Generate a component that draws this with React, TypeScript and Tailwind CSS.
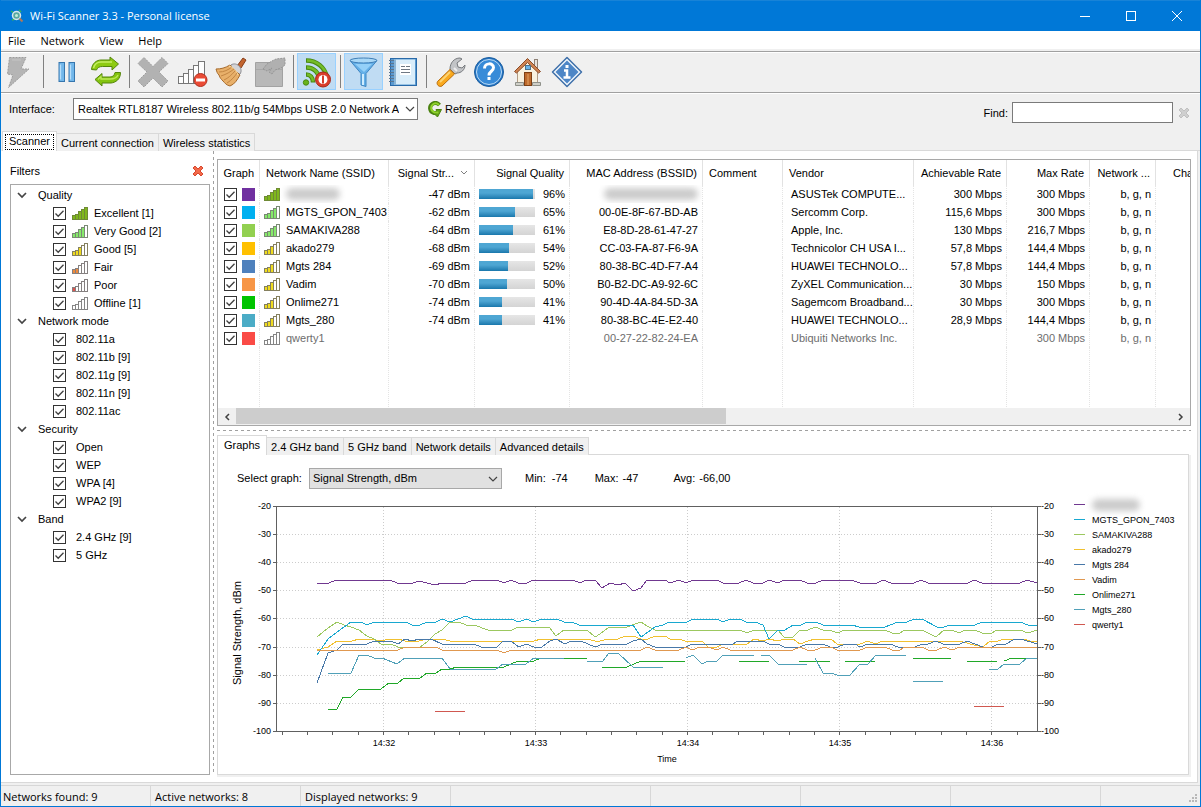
import { useState } from "react";
import type { ReactNode } from "react";

type Quality = "excellent" | "verygood" | "good" | "fair" | "poor" | "offline";

const LEVELS: Record<Quality, { bars: number; fill: string; stroke: string }> = {
  excellent: { bars: 5, fill: "#7fb71c", stroke: "#6f8a35" },
  verygood: { bars: 4, fill: "#86ea6a", stroke: "#7a8a74" },
  good: { bars: 3, fill: "#f0dc1e", stroke: "#85805f" },
  fair: { bars: 2, fill: "#ef8a3c", stroke: "#858080" },
  poor: { bars: 1, fill: "#e0524c", stroke: "#858080" },
  offline: { bars: 0, fill: "#ffffff", stroke: "#858585" },
};

const NETWORKS = [
  { name: "", color: "#7030a0", quality: "excellent", signal: "-47 dBm", percent: 96, mac: "", vendor: "ASUSTek COMPUTE...", rate: "300 Mbps", max: "300 Mbps" },
  { name: "MGTS_GPON_7403", color: "#00b0f0", quality: "verygood", signal: "-62 dBm", percent: 65, mac: "00-0E-8F-67-BD-AB", vendor: "Sercomm Corp.", rate: "115,6 Mbps", max: "300 Mbps" },
  { name: "SAMAKIVA288", color: "#92d050", quality: "verygood", signal: "-64 dBm", percent: 61, mac: "E8-8D-28-61-47-27", vendor: "Apple, Inc.", rate: "130 Mbps", max: "216,7 Mbps" },
  { name: "akado279", color: "#ffc000", quality: "good", signal: "-68 dBm", percent: 54, mac: "CC-03-FA-87-F6-9A", vendor: "Technicolor CH USA I...", rate: "57,8 Mbps", max: "144,4 Mbps" },
  { name: "Mgts 284", color: "#4f81bd", quality: "good", signal: "-69 dBm", percent: 52, mac: "80-38-BC-4D-F7-A4", vendor: "HUAWEI TECHNOLO...", rate: "57,8 Mbps", max: "144,4 Mbps" },
  { name: "Vadim", color: "#f79646", quality: "good", signal: "-70 dBm", percent: 50, mac: "B0-B2-DC-A9-92-6C", vendor: "ZyXEL Communication...", rate: "30 Mbps", max: "150 Mbps" },
  { name: "Onlime271", color: "#00c400", quality: "good", signal: "-74 dBm", percent: 41, mac: "90-4D-4A-84-5D-3A", vendor: "Sagemcom Broadband...", rate: "30 Mbps", max: "300 Mbps" },
  { name: "Mgts_280", color: "#4bacc6", quality: "good", signal: "-74 dBm", percent: 41, mac: "80-38-BC-4E-E2-40", vendor: "HUAWEI TECHNOLO...", rate: "28,9 Mbps", max: "144,4 Mbps" },
  { name: "qwerty1", color: "#fa4b46", quality: "offline", signal: "", percent: null, mac: "00-27-22-82-24-EA", vendor: "Ubiquiti Networks Inc.", rate: "", max: "300 Mbps" },
] as const;

const FILTERS: { title: string; items: { label: string; quality?: Quality }[] }[] = [
  {
    title: "Quality",
    items: [
      { label: "Excellent [1]", quality: "excellent" },
      { label: "Very Good [2]", quality: "verygood" },
      { label: "Good [5]", quality: "good" },
      { label: "Fair", quality: "fair" },
      { label: "Poor", quality: "poor" },
      { label: "Offline [1]", quality: "offline" },
    ],
  },
  {
    title: "Network mode",
    items: [{ label: "802.11a" }, { label: "802.11b [9]" }, { label: "802.11g [9]" }, { label: "802.11n [9]" }, { label: "802.11ac" }],
  },
  { title: "Security", items: [{ label: "Open" }, { label: "WEP" }, { label: "WPA [4]" }, { label: "WPA2 [9]" }] },
  { title: "Band", items: [{ label: "2.4 GHz [9]" }, { label: "5 GHz" }] },
];

const SERIES: { color: string; lines: string[] }[] = [
  {
    color: "#f0c030",
    lines: [
      "317,650 328,647 337,641 352,641 359,639 371,639 381,641 389,639 398,639 405,641 419,641 427,639 442,639 450,641 534,641 541,639 587,639 595,641 600,641 608,639 618,639 625,636 633,636 641,639 648,639 655,636 665,636 670,639 679,639 685,641 702,641 708,647 717,647 723,644 747,644 754,639 763,641 769,639 778,641 784,639 793,639 800,644 808,641 815,639 831,639 837,644 860,644 868,641 875,644 883,641 960,641 970,644 983,647 990,641 998,641 1004,639 1023,639 1030,641 1037,641",
    ],
  },
  {
    color: "#9cc860",
    lines: [
      "317,637 328,628 337,622 344,625 351,627 359,630 367,636 374,639 381,644 391,644 398,647 420,647 427,642 435,634 442,630 450,622 459,622 466,625 474,625 488,630 512,630 518,627 549,627 556,636 564,630 587,630 595,637 600,634 609,627 627,627 641,622 647,626 655,630 740,630 747,633 754,630 778,630 784,637 793,637 800,630 808,630 815,627 823,630 830,630 837,633 845,630 885,630 892,633 900,633 905,630 922,630 936,637 944,630 952,630 959,633 965,630 975,630 982,633 992,633 997,630 1020,630 1028,633 1037,630",
    ],
  },
  {
    color: "#18a8d0",
    lines: [
      "317,655 328,639 336,633 344,627 351,622 361,622 367,625 374,622 406,622 412,625 420,625 427,622 436,622 442,619 450,622 466,616 472,619 511,619 519,622 526,619 534,622 541,619 557,619 564,622 572,622 579,625 633,625 641,637 655,627 663,625 669,622 687,622 693,619 717,619 723,622 730,619 740,619 746,622 755,622 763,625 769,639 778,630 785,630 793,625 801,625 807,622 816,622 823,625 852,625 859,627 885,627 898,622 907,622 914,619 922,619 937,627 944,627 950,625 975,625 982,622 1020,622 1028,625 1037,625",
    ],
  },
  {
    color: "#4878a8",
    lines: [
      "317,683 328,653 337,650 343,644 367,644 374,641 391,641 398,644 405,639 412,641 419,639 431,639 442,644 474,644 481,647 497,647 503,641 511,641 519,647 526,644 534,647 542,647 550,641 556,639 565,644 571,641 581,641 595,647 603,644 627,644 633,641 641,639 647,644 655,647 686,647 692,644 733,644 738,641 763,641 769,644 778,644 784,647 800,647 807,644 823,644 830,647 838,647 845,644 855,644 860,647 868,644 890,644 898,647 915,647 922,644 928,644 936,641 943,644 960,644 967,641 983,647 992,647 998,644 1006,644 1013,640 1021,639 1037,644",
    ],
  },
  {
    color: "#e09850",
    lines: [
      "317,650 398,650 405,647 436,647 442,650 497,650 504,653 511,650 641,650 647,647 655,650 679,650 686,647 692,650 700,647 708,647 717,650 723,647 730,650 793,650 800,647 807,650 815,650 823,647 831,647 837,650 860,650 868,647 885,647 892,650 900,650 905,647 922,647 928,650 937,650 944,647 952,650 960,647 1037,647",
    ],
  },
  {
    color: "#20a828",
    lines: [
      "328,709 337,709 343,697 351,697 359,689 381,689 389,683 398,683 404,678 420,678 427,673 436,673 442,669 450,669 457,667 504,667 518,661 534,661 541,658 587,658",
      "602,667 627,667 641,661 685,661",
      "739,661 769,661",
      "799,661 830,661",
      "845,661 875,661",
      "913,658 951,658",
      "967,661 997,661",
      "1004,661 1012,658 1027,658",
    ],
  },
  {
    color: "#50a0b8",
    lines: [
      "328,673 351,673 359,655 367,655 374,658 382,658 397,664 405,658 442,658 450,669 496,669 503,664 526,664 534,658 564,658",
      "587,661 603,661 609,653 618,653 633,667 663,667",
      "686,658 693,655 702,664 708,661 717,661 723,655 754,655",
      "761,655 769,655 778,664 807,664",
      "815,658 823,673 831,673 837,675 850,675 860,664 868,664 876,655 906,655",
      "913,681 943,681",
      "989,669 998,669 1004,664 1020,664 1027,658 1037,658",
    ],
  },
  { color: "#d05850", lines: ["435,711 465,711", "974,706 1004,706"] },
  {
    color: "#703890",
    lines: [
      "317,583 329,583 336,580 390,580 397,583 413,583 419,581 427,583 435,585 442,583 466,583 473,580 497,580 504,583 511,580 518,583 527,583 533,580 573,580 580,583 586,580 595,580 602,588 610,583 618,585 625,583 633,591 641,588 647,580 665,580 670,583 679,580 686,583 693,580 717,580 723,583 739,583 746,580 753,583 763,583 769,580 778,583 784,580 800,580 807,583 816,583 823,580 851,580 860,583 877,583 883,580 891,583 914,583 921,580 928,583 968,583 974,580 982,583 1020,583 1027,580 1037,583",
    ],
  },
];

const LEGEND = [
  { name: "", color: "#703890" },
  { name: "MGTS_GPON_7403", color: "#18a8d0" },
  { name: "SAMAKIVA288", color: "#9cc860" },
  { name: "akado279", color: "#f0c030" },
  { name: "Mgts 284", color: "#4878a8" },
  { name: "Vadim", color: "#e09850" },
  { name: "Onlime271", color: "#20a828" },
  { name: "Mgts_280", color: "#50a0b8" },
  { name: "qwerty1", color: "#d05850" },
];

function SignalBars({ quality }: { quality: Quality }) {
  const level = LEVELS[quality];
  return (
    <svg width="16" height="13" viewBox="0 0 16 13" shapeRendering="crispEdges" className="shrink-0" aria-hidden="true">
      {[0, 1, 2, 3, 4].map((i) => {
        const h = [4, 5, 8, 10, 12][i];
        return (
          <rect
            key={i}
            x={i * 3 + 0.5}
            y={12.5 - h}
            width="3"
            height={h}
            fill={i < level.bars ? level.fill : "#ffffff"}
            stroke={level.stroke}
          />
        );
      })}
    </svg>
  );
}

function CheckBox({ id, label }: { id: string; label?: string }) {
  const [checked, setChecked] = useState(true);
  return (
    <span className="relative inline-block h-[13px] w-[13px] shrink-0">
      <input
        id={id}
        type="checkbox"
        checked={checked}
        onChange={() => setChecked(!checked)}
        aria-label={label}
        className="block h-[13px] w-[13px] appearance-none border border-[#333333] bg-white"
      />
      {checked && (
        <svg viewBox="0 0 13 13" className="pointer-events-none absolute inset-0 h-[13px] w-[13px]" fill="none" aria-hidden="true">
          <path d="M2.5 6.5l2.7 2.8 5.3-5.6" stroke="#404040" strokeWidth="1.3" />
        </svg>
      )}
    </span>
  );
}

function Chevron({ className }: { className?: string }) {
  return (
    <svg width="10" height="6" viewBox="0 0 10 6" fill="none" className={className} aria-hidden="true">
      <path d="M1 1l4 4 4-4" stroke="#444444" strokeWidth="1.2" />
    </svg>
  );
}

function ToolButton({ label, active, children }: { label: string; active?: boolean; children: ReactNode }) {
  return (
    <button
      aria-label={label}
      className={`flex h-[37px] w-[39px] items-center justify-center ${active ? "border border-[#99d1ff] bg-[#c0dcf3]" : ""}`}
    >
      <svg width="32" height="32" viewBox="0 0 32 32" fill="none">
        {children}
      </svg>
    </button>
  );
}

function Separator() {
  return (
    <span className="flex h-[37px] w-2 justify-center py-[2px]">
      <span className="w-px bg-[#808080]" />
    </span>
  );
}

function Toolbar() {
  return (
    <div className="flex h-[40px] border-t border-white">
      <button aria-label="Connect" disabled className="w-[38px] shrink-0">
        <svg width="38" height="37" viewBox="0 0 38 37" fill="none">
          <path d="M8.500 3.500H25L20 15h8L7.500 33.500 12 21l-5.500-1z" fill="#b5b5b5" stroke="#9c9c9c" strokeDasharray="2 1" />
          <path d="M11 6h9" stroke="#c6c6c6" />
        </svg>
      </button>
      <Separator />
      <ToolButton label="Pause">
        <rect x="8" y="6.500" width="5.500" height="19" fill="#72b7ea" stroke="#3676ae" />
        <rect x="18" y="6.500" width="5.500" height="19" fill="#72b7ea" stroke="#3676ae" />
        <path d="M9.500 8.500v15M19.500 8.500v15" stroke="#b5defa" strokeWidth="1.300" />
      </ToolButton>
      <ToolButton label="Refresh">
        <path d="M1.500 13.500C2 7 7 4 11 4h9V1l8.500 7-6.500 6v-3.500H12.500c-3 0-5 1-6 3.500z" fill="#8ecb12" stroke="#55860c" />
        <path d="M3.500 12C5 7 9 6 11 6h11" stroke="#c5ee63" strokeWidth="1.500" />
        <path d="M30.500 16.500c0 7-5 10-9.500 10.500H12v3L5 23.500l7-6V21h8c3 0 4.500-2 5-4.500z" fill="#84c410" stroke="#55860c" />
        <path d="M8 23.500l3-3v2.500h9c4 0 7-1.500 8-4" stroke="#bce756" strokeWidth="1.300" />
      </ToolButton>
      <Separator />
      <ToolButton label="Delete">
        <path d="M7 1.500l9 9 9-9 6 6-9 8.500 9 9-6 6-9-9-9 9-6-6 9-9-9-8.500z" fill="#b2b2b2" stroke="#9d9d9d" strokeDasharray="2 1" strokeLinejoin="round" />
      </ToolButton>
      <ToolButton label="Hide inactive networks">
        <g fill="#fdfdfd" stroke="#777777">
          <rect x="2.500" y="20.500" width="5" height="7" />
          <rect x="7.500" y="17.500" width="5" height="10" />
          <rect x="12.500" y="13.500" width="5" height="14" />
          <rect x="17.500" y="9.500" width="5" height="18" />
          <rect x="22.500" y="5.500" width="6" height="22" />
        </g>
        <circle cx="24.500" cy="24" r="6.500" fill="#ea4b35" stroke="#b3301f" />
        <rect x="20" y="22.500" width="9" height="3" fill="#ffffff" />
      </ToolButton>
      <ToolButton label="Clear">
        <path d="M22 10l6-8 3 2-5 8z" fill="#c3642e" stroke="#873d18" />
        <path d="M16 9c3-2 6-1 8 1s3 5 1 8l-3 1-7-7z" fill="#d3d3d6" stroke="#8a8a8f" />
        <path d="M15 9C10 12 6 13 1 13c1 3 1 4 3 6 1 3 2 4 4 6 2 2 3 4 7 5 5-2 7-6 10-11z" fill="#e8b06a" stroke="#a66a2c" />
        <path d="M4 16c5 0 9-2 13-5M6 20c6-2 9-4 13-7M9 24c6-3 8-6 11-9M12 27c5-3 8-7 10-10" stroke="#c28543" />
        <path d="M14 10c4 1 8 5 9 9" stroke="#f8dca8" />
      </ToolButton>
      <ToolButton label="Properties">
        <path d="M1.500 6.500h27v24h-27z" fill="#b8b8b8" stroke="#a2a2a2" />
        <path d="M2 13.500h26" stroke="#a8a8a8" />
        <path d="M9 13l4-5 5-3 4-2 9-1v7l-4 3-6 2-3 4-3-2 3-4-5 3z" fill="#b0b0b0" stroke="#969696" strokeDasharray="2 1" />
      </ToolButton>
      <Separator />
      <ToolButton label="Disable sounds" active>
        <g stroke="#4a8a12" strokeWidth="4.500">
          <path d="M5 4.500c11 0 19 7 21 17" />
          <path d="M5 11.500c8 0 13 5 14 14" />
          <path d="M5 18.500c4 0 7 3 7 8" />
        </g>
        <g stroke="#74bd28" strokeWidth="2.500">
          <path d="M6 4.500c10 0 18 7 20 16" />
          <path d="M6 11.500c7 0 12 5 13 13" />
          <path d="M6 18.500c3 0 6 3 6 7" />
        </g>
        <circle cx="5" cy="26.500" r="2.700" fill="#68b41d" stroke="#4a8a12" />
        <circle cx="22" cy="23.500" r="7.500" fill="#da3e2c" stroke="#a82818" />
        <circle cx="22" cy="23.500" r="4.500" fill="#ffffff" />
        <rect x="21" y="19.500" width="2" height="8" fill="#d43c2b" />
      </ToolButton>
      <Separator />
      <ToolButton label="Filters" active>
        <path d="M2 4.500l11 13V29l5 1.500V17.500l11-13z" fill="#65b0e8" stroke="#3f86c2" />
        <path d="M7 8h17l-8 8z" fill="#94d0f8" />
        <path d="M15 18v11" stroke="#d0edff" strokeWidth="2" />
        <ellipse cx="15.500" cy="4.500" rx="13.500" ry="2.500" fill="#a9d8f7" stroke="#3f7fb8" />
      </ToolButton>
      <ToolButton label="Details">
        <rect x="3.500" y="2.500" width="26" height="27" fill="#5b9ad0" stroke="#296aa9" />
        <rect x="8" y="3.500" width="20" height="25" fill="#d9edfa" />
        <rect x="13" y="8" width="11" height="11" fill="#ffffff" />
        <path d="M14 10.500h4m1 0h4M14 13.500h9M14 16.500h9" stroke="#6f7883" />
        <path d="M2 4.500h5M2 7.500h5M2 10.500h5M2 13.500h5M2 16.500h5M2 19.500h5M2 22.500h5M2 25.500h5" stroke="#5b7690" />
        <path d="M8 3v26" stroke="#8cb6d6" strokeWidth="2" />
      </ToolButton>
      <Separator />
      <ToolButton label="Settings">
        <path d="M18 15l-2-2c0-6 4-11 10-11l2 1-5 4 1 4 4 1 3-3c0 5-4 8-8 8l-2 1z" fill="#c2c4c7" stroke="#76797d" />
        <path d="M20 12l3 3" stroke="#eeeeee" strokeWidth="2" />
        <path d="M16 13.500l4.500 4.500L8 30c-3 1.500-6-1.500-4.500-4.500z" fill="#f9a91e" stroke="#b86c0c" />
        <path d="M16 16L6 26" stroke="#fdd372" strokeWidth="2" />
      </ToolButton>
      <ToolButton label="Help">
        <circle cx="16" cy="16" r="14.500" fill="#2475c4" stroke="#1c5d9e" />
        <circle cx="16" cy="16" r="12.500" fill="#388bd8" stroke="#bfddf6" />
        <path d="M11.500 12.500c0-6 9-6 9-1 0 4-4.500 3.500-4.500 8" stroke="#ffffff" strokeWidth="3" />
        <rect x="14.500" y="21" width="3" height="3" fill="#ffffff" />
      </ToolButton>
      <ToolButton label="Home">
        <rect x="22.500" y="3.500" width="3" height="8" fill="#e8e2dc" stroke="#8e8176" />
        <path d="M5.500 13L15.500 4l10 9v15.500h-20z" fill="#f8f1df" stroke="#b09c86" />
        <path d="M2.500 15.500L15.500 2.500l13 13-2 1.500-11-10.500L4.500 17z" fill="#cf8352" stroke="#8b4b26" />
        <path d="M3.500 26.500h8v3h-8zM20.500 26.500h8v3h-8z" fill="#cfcfc8" stroke="#8f918a" />
        <rect x="12.500" y="16.500" width="7" height="13" fill="#be6a2c" stroke="#7e3f13" />
        <path d="M16 18v11" stroke="#e3a465" />
        <rect x="13.500" y="9.500" width="5" height="4" fill="#69b3e8" stroke="#49728e" />
      </ToolButton>
      <ToolButton label="About">
        <path d="M16 1.500L30.500 16 16 30.500 1.500 16z" fill="#f2f7fc" stroke="#3e6fa9" strokeWidth="1.500" strokeLinejoin="round" />
        <path d="M16 4.500L27.500 16 16 27.500 4.500 16z" fill="#4d86c6" />
        <rect x="14.500" y="9" width="3" height="3" fill="#ffffff" />
        <path d="M13 14.500h3v7M12.500 21.500h7" stroke="#ffffff" strokeWidth="2.500" />
      </ToolButton>
    </div>
  );
}

function SmallCross({ fill, stroke }: { fill: string; stroke: string }) {
  return (
    <svg width="12" height="12" viewBox="0 0 12 12" aria-hidden="true">
      <path d="M3 1l3 3 3-3 2 2-3 3 3 3-2 2-3-3-3 3-2-2 3-3-3-3z" fill={fill} stroke={stroke} strokeLinejoin="round" />
    </svg>
  );
}

function Tab({ label, active }: { label: string; active?: boolean }) {
  if (active) {
    return (
      <button role="tab" aria-selected="true" className="h-5 border border-b-0 border-[#d9d9d9] bg-white px-[6px] pb-[2px] leading-4">
        {label}
      </button>
    );
  }
  return (
    <button role="tab" aria-selected="false" className="h-[18px] border-t border-r border-[#d9d9d9] bg-[#f0f0f0] px-1 leading-4">
      {label}
    </button>
  );
}

function FilterPanel() {
  return (
    <aside className="flex w-[208px] shrink-0 flex-col pl-2">
      <div className="flex h-[33px] items-center justify-between pt-[6px] pr-[6px]">
        <span>Filters</span>
        <button aria-label="Reset filters">
          <SmallCross fill="#f26a4a" stroke="#d8472e" />
        </button>
      </div>
      <div className="flex-1 border border-[#a8a8a8] pt-px">
        {FILTERS.map((group) => (
          <section key={group.title}>
            <div className="flex h-[18px] items-center pl-[6px]">
              <button aria-label={`Collapse ${group.title}`} className="w-[21px]">
                <svg width="10" height="7" viewBox="0 0 10 7" fill="none">
                  <path d="M1 1l4 4 4-4" stroke="#444444" strokeWidth="1.700" />
                </svg>
              </button>
              {group.title}
            </div>
            {group.items.map((item) => (
              <div key={item.label} className="flex h-[18px] items-center pl-[42px]">
                <CheckBox id={`filter-${item.label}`} />
                {item.quality && (
                  <span className="pl-[6px]">
                    <SignalBars quality={item.quality} />
                  </span>
                )}
                <label htmlFor={`filter-${item.label}`} className={item.quality ? "pl-[6px]" : "pl-[10px]"}>
                  {item.label}
                </label>
              </div>
            ))}
          </section>
        ))}
      </div>
    </aside>
  );
}

function Blurred({ className }: { className: string }) {
  return <span className={`inline-block h-[12px] rounded-full bg-[#cbcbcb] blur-[3px] ${className}`} />;
}

const CELL = "border-r border-dotted border-[#e4e4e4] px-1 whitespace-nowrap overflow-hidden";

function NetworkTable() {
  return (
    <div className="flex h-[267px] flex-col overflow-hidden border border-[#a8a8a8]">
      <div className="flex-1 overflow-hidden">
        <table className="w-[1040px] table-fixed border-separate border-spacing-0">
          <colgroup>
            <col className="w-[42px]" />
            <col className="w-[129px]" />
            <col className="w-[86px]" />
            <col className="w-[95px]" />
            <col className="w-[133px]" />
            <col className="w-[80px]" />
            <col className="w-[131px]" />
            <col className="w-[93px]" />
            <col className="w-[83px]" />
            <col className="w-[66px]" />
            <col />
          </colgroup>
          <thead>
            <tr className="h-[25px] [&>th]:overflow-hidden [&>th]:border-r [&>th]:border-[#e2e2e2] [&>th]:p-0 [&>th]:px-[5px] [&>th]:font-normal [&>th]:whitespace-nowrap">
              <th className="text-right">Graph</th>
              <th className="text-left">
                <span className="pl-px">Network Name (SSID)</span>
              </th>
              <th>
                <span className="flex items-center justify-end gap-[6px]">
                  Signal Str...
                  <svg width="8" height="5" viewBox="0 0 8 5" fill="none" className="mr-px" aria-hidden="true">
                    <path d="M1 1l3 3 3-3" stroke="#808080" />
                  </svg>
                </span>
              </th>
              <th className="text-right">Signal Quality</th>
              <th className="text-right">MAC Address (BSSID)</th>
              <th className="text-left">
                <span className="pl-px">Comment</span>
              </th>
              <th className="text-left">
                <span className="pl-px">Vendor</span>
              </th>
              <th className="text-right">Achievable Rate</th>
              <th className="text-right">Max Rate</th>
              <th className="text-right">Network ...</th>
              <th className="text-left">
                <span className="pl-3">Channel</span>
              </th>
            </tr>
          </thead>
          <tbody>
            {NETWORKS.map((n, i) => (
              <tr key={i} className={`h-[18px] ${n.quality === "offline" ? "text-[#6d6d6d]" : ""}`}>
                <td className={CELL}>
                  <span className="flex items-center gap-[5px] pl-[2px]">
                    <CheckBox id={`graph-${i}`} label={`Show ${n.name || "network"} on graph`} />
                    <span className="h-[13px] w-[13px]" style={{ backgroundColor: n.color }} />
                  </span>
                </td>
                <td className={CELL}>
                  <span className="flex items-center gap-[6px]">
                    <SignalBars quality={n.quality} />
                    {n.name || <Blurred className="w-[54px]" />}
                  </span>
                </td>
                <td className={`${CELL} text-right`}>{n.signal}</td>
                <td className={CELL}>
                  {n.percent !== null && (
                    <span className="flex items-center justify-between">
                      <span className="h-[10px] w-[56px] bg-linear-to-b from-[#e6e6e6] to-[#d4d4d4]">
                        <span
                          className="block h-full bg-linear-to-b from-[#4ea6d3] from-40% to-[#1878ac]"
                          style={{ width: `${n.percent}%` }}
                        />
                      </span>
                      {n.percent}%
                    </span>
                  )}
                </td>
                <td className={`${CELL} text-right`}>
                  {n.mac || (
                    <span className="flex items-center justify-end">
                      <Blurred className="w-[94px]" />
                    </span>
                  )}
                </td>
                <td className={CELL} />
                <td className={CELL}>
                  <span className="pl-1">{n.vendor}</span>
                </td>
                <td className={`${CELL} text-right`}>{n.rate}</td>
                <td className={`${CELL} text-right`}>{n.max}</td>
                <td className={`${CELL} text-right`}>b, g, n</td>
                <td />
              </tr>
            ))}
            <tr className="h-[60px]" aria-hidden="true">
              {Array.from({ length: 10 }, (_, i) => (
                <td key={i} className={CELL} />
              ))}
              <td />
            </tr>
          </tbody>
        </table>
      </div>
      <div className="flex h-[17px] shrink-0 items-stretch bg-[#f0f0f0]">
        <button aria-label="Scroll left" className="flex w-[18px] items-center justify-center">
          <svg width="6" height="8" viewBox="0 0 6 8" fill="none">
            <path d="M5 1L2 4l3 3" stroke="#404040" strokeWidth="1.500" />
          </svg>
        </button>
        <div className="flex-1">
          <div className="h-4 w-11/21 bg-[#cdcdcd]" />
        </div>
        <button aria-label="Scroll right" className="flex w-[18px] items-center justify-center">
          <svg width="6" height="8" viewBox="0 0 6 8" fill="none">
            <path d="M1 1l3 3-3 3" stroke="#404040" strokeWidth="1.500" />
          </svg>
        </button>
      </div>
    </div>
  );
}

function SignalChart() {
  const rows = [-20, -30, -40, -50, -60, -70, -80, -90, -100];
  const times = ["14:32", "14:33", "14:34", "14:35", "14:36"];
  const rowY = (i: number) => Math.round(506 + i * 28.1);
  return (
    <svg viewBox="218 494 850 276" className="h-auto min-w-0 flex-1" fill="none" fontSize="9" role="img" aria-label="Signal Strength, dBm">
      <g shapeRendering="crispEdges">
        {rows.slice(1, -1).map((v, i) => (
          <path key={v} d={`M277 ${rowY(i + 1) + 0.5}H1037`} stroke="#cccccc" strokeDasharray="1 2" />
        ))}
        {times.map((t, i) => (
          <path key={t} d={`M${383.5 + i * 152} 507V731`} stroke="#cccccc" strokeDasharray="1 2" />
        ))}
        <path d="M276.500 506.500H1037.500V731.500H276.500z" stroke="#606060" />
        {rows.map((v, i) => (
          <path key={v} d={`M273 ${rowY(i) + 0.5}h3M1038 ${rowY(i) + 0.5}h3`} stroke="#606060" />
        ))}
        {Array.from({ length: 30 }, (_, i) => (
          <path key={i} d={`M${Math.round(281.500 + i * 25.35) + 0.5} 732v3`} stroke="#606060" />
        ))}
        {SERIES.map((s) => s.lines.map((points) => <polyline key={s.color + points} points={points} stroke={s.color} />))}
      </g>
      <g fill="#000000">
        {rows.map((v, i) => (
          <g key={v}>
            <text x="271" y={rowY(i) + 3} textAnchor="end">
              {v}
            </text>
            <text x="1041" y={rowY(i) + 3}>
              {v}
            </text>
          </g>
        ))}
        {times.map((t, i) => (
          <text key={t} x={384 + i * 152} y="746" textAnchor="middle">
            {t}
          </text>
        ))}
        <text x="667" y="762" textAnchor="middle">
          Time
        </text>
        <text transform="translate(241 633) rotate(-90)" fontSize="11" textAnchor="middle">
          Signal Strength, dBm
        </text>
      </g>
    </svg>
  );
}

function GraphPanel() {
  return (
    <section className="mr-[2px] flex flex-1 flex-col">
      <div role="tablist" className="flex items-end">
        <Tab label="Graphs" active />
        <Tab label="2.4 GHz band" />
        <Tab label="5 GHz band" />
        <Tab label="Network details" />
        <Tab label="Advanced details" />
        <span className="flex-1 border-b border-[#d9d9d9]" />
      </div>
      <div className="flex-1 border border-t-0 border-[#d9d9d9] shadow-[1px_1px_0_1px_#f0f0f0]">
        <div className="flex h-[39px] items-center pt-[7px] pl-[19px]">
          <label htmlFor="graph-kind" className="w-[72px]">
            Select graph:
          </label>
          <span className="relative">
            <select id="graph-kind" className="h-[21px] w-[193px] appearance-none border border-[#a8a8a8] bg-[#e1e1e1] px-[3px]">
              <option>Signal Strength, dBm</option>
            </select>
            <Chevron className="pointer-events-none absolute top-2 right-[4px]" />
          </span>
          <dl className="flex gap-[27px] pb-px pl-[23px]">
            <div className="flex gap-[6px]">
              <dt>Min:</dt>
              <dd>-74</dd>
            </div>
            <div className="flex gap-1">
              <dt>Max:</dt>
              <dd>-47</dd>
            </div>
            <div className="flex gap-1 pl-2">
              <dt>Avg:</dt>
              <dd>-66,00</dd>
            </div>
          </dl>
        </div>
        <div className="flex items-start">
          <SignalChart />
          <ul className="w-[120px] shrink-0 pt-[3px] text-[9px]">
            {LEGEND.map((l) => (
              <li key={l.color} className="flex h-[15px] items-center gap-[7px] pl-[6px]">
                <span className="h-px w-[11px]" style={{ backgroundColor: l.color }} />
                {l.name || <Blurred className="w-[48px]" />}
              </li>
            ))}
          </ul>
        </div>
      </div>
    </section>
  );
}

function StatusBar() {
  return (
    <footer className="flex h-[21px] shrink-0 items-stretch border-t border-[#d7d7d7] bg-[#f0f0f0] font-['Open_Sans','Noto_Sans',sans-serif] text-[11px] leading-[22px] [&>span]:border-r [&>span]:border-[#d7d7d7]">
      <span className="w-[150px] pl-[2px]">Networks found: 9</span>
      <span className="w-[150px] pl-1">Active networks: 8</span>
      <span className="w-[150px] pl-1">Displayed networks: 9</span>
      <span className="w-[200px]" />
      <span className="w-[150px]" />
      <span className="w-[150px]" />
      <span className="w-[150px]" />
      <div className="flex flex-1 items-end justify-end p-[2px]">
        <svg width="10" height="10" viewBox="0 0 10 10" fill="#b8b8b8" aria-hidden="true">
          <path d="M7 0h2v2H7zM7 3h2v2H7zM4 3h2v2H4zM7 6h2v2H7zM4 6h2v2H4zM1 6h2v2H1z" />
        </svg>
      </div>
    </footer>
  );
}

export default function App() {
  return (
    <div className="flex min-h-screen flex-col border border-t-0 border-[#0078d7] bg-[#f0f0f0] font-['Liberation_Sans',Arial,sans-serif] text-[11px] leading-[14px] text-black">
      <header className="flex h-[31px] shrink-0 items-center border-t border-[#1883d7] bg-[#0078d7] pl-[9px] text-white">
        <svg width="14" height="14" viewBox="0 0 14 14" fill="none" aria-hidden="true">
          <path d="M1 2l3 2M2 11l3-1M9 1l2 2" stroke="#36b05c" strokeWidth="1.500" />
          <circle cx="6.500" cy="6.500" r="4" fill="#5aa8a0" stroke="#d5e6ee" strokeWidth="1.500" />
          <circle cx="6.500" cy="6.500" r="1.500" fill="#c4efd5" />
          <path d="M9.500 9.500l3 3" stroke="#b07858" strokeWidth="2" />
        </svg>
        <h1 className="flex-1 pl-[6px] font-['Open_Sans','Noto_Sans',sans-serif] text-[11px]">Wi-Fi Scanner 3.3 - Personal license</h1>
        <button aria-label="Minimize" className="flex h-[30px] w-[46px] items-center justify-center">
          <svg width="10" height="10" viewBox="0 0 10 10" shapeRendering="crispEdges">
            <path d="M0 5.500h10" stroke="#ffffff" />
          </svg>
        </button>
        <button aria-label="Maximize" className="flex h-[30px] w-[46px] items-center justify-center">
          <svg width="10" height="10" viewBox="0 0 10 10" fill="none" shapeRendering="crispEdges">
            <path d="M.5.5h9v9h-9z" stroke="#ffffff" />
          </svg>
        </button>
        <button aria-label="Close" className="flex h-[30px] w-[46px] items-center justify-center">
          <svg width="10" height="10" viewBox="0 0 10 10">
            <path d="M0 0l10 10M10 0L0 10" stroke="#ffffff" />
          </svg>
        </button>
      </header>

      <nav className="flex h-[18px] shrink-0 items-center gap-[15px] bg-white pt-px pl-[7px] font-['Open_Sans','Noto_Sans',sans-serif] text-[11px]">
        <button>File</button>
        <button>Network</button>
        <button>View</button>
        <button>Help</button>
      </nav>

      <div className="mt-[2px] shrink-0 border-y border-[#a0a0a0]">
        <Toolbar />
      </div>

      <div className="flex h-[38px] shrink-0 items-start border-t border-white">
        <div className="flex items-center pt-1 pl-2">
          <label htmlFor="interface" className="w-16">
            Interface:
          </label>
          <span className="relative">
            <select id="interface" className="h-[22px] w-[345px] appearance-none border border-[#7a7a7a] bg-white pr-[18px] pb-px pl-1">
              <option>Realtek RTL8187 Wireless 802.11b/g 54Mbps USB 2.0 Network Adapter</option>
            </select>
            <Chevron className="pointer-events-none absolute top-2 right-[3px]" />
          </span>
          <button className="flex items-center gap-[3px] pl-[9px]">
            <svg width="15" height="16" viewBox="0 0 15 16" fill="none" aria-hidden="true">
              <path d="M12.500 4C10.500 1.800 8 1.500 6 2.500 1.500 5 2.500 11 7 12h3" stroke="#4a8210" strokeWidth="4" />
              <path d="M9 8.500h5.500L10.500 16 8 13.500 10 11.500z" fill="#5f9f18" stroke="#4a8210" />
              <path d="M12 4C10.500 2.300 8 2 6.300 3 3 5 3.500 10 7.500 11.500h4" stroke="#8fd32c" strokeWidth="2" />
            </svg>
            Refresh interfaces
          </button>
        </div>
        <div className="ml-auto flex items-center gap-1 pt-2 pr-[10px]">
          <label htmlFor="find">Find:</label>
          <input id="find" type="text" className="h-[21px] w-[161px] border border-[#7a7a7a] bg-white px-1" />
          <button aria-label="Clear search" className="pl-px">
            <SmallCross fill="#cfcfcf" stroke="#c0c0c0" />
          </button>
        </div>
      </div>

      <div role="tablist" className="flex shrink-0 items-end pl-px">
        <button role="tab" aria-selected="true" className="h-5 border border-b-0 border-[#d9d9d9] bg-white p-[2px] pb-px">
          <span className="block h-4 border border-dotted border-black px-[3px] leading-[13px]">Scanner</span>
        </button>
        <Tab label="Current connection" />
        <Tab label="Wireless statistics" />
        <span className="flex-1 border-b border-[#d9d9d9]" />
      </div>

      <main className="mr-[2px] mb-[2px] flex flex-1 border-r border-b border-[#d9d9d9] bg-white pb-[7px] pl-px">
        <FilterPanel />
        <div className="mx-[3px] w-px shrink-0 bg-[repeating-linear-gradient(to_bottom,#a0a0a0_0_3px,transparent_3px_6px)]" />
        <div className="flex min-w-0 flex-1 flex-col pt-2 pr-[6px]">
          <NetworkTable />
          <div className="my-1 h-px shrink-0 bg-[repeating-linear-gradient(to_right,#a0a0a0_0_3px,transparent_3px_6px)]" />
          <GraphPanel />
        </div>
      </main>

      <StatusBar />
    </div>
  );
}
